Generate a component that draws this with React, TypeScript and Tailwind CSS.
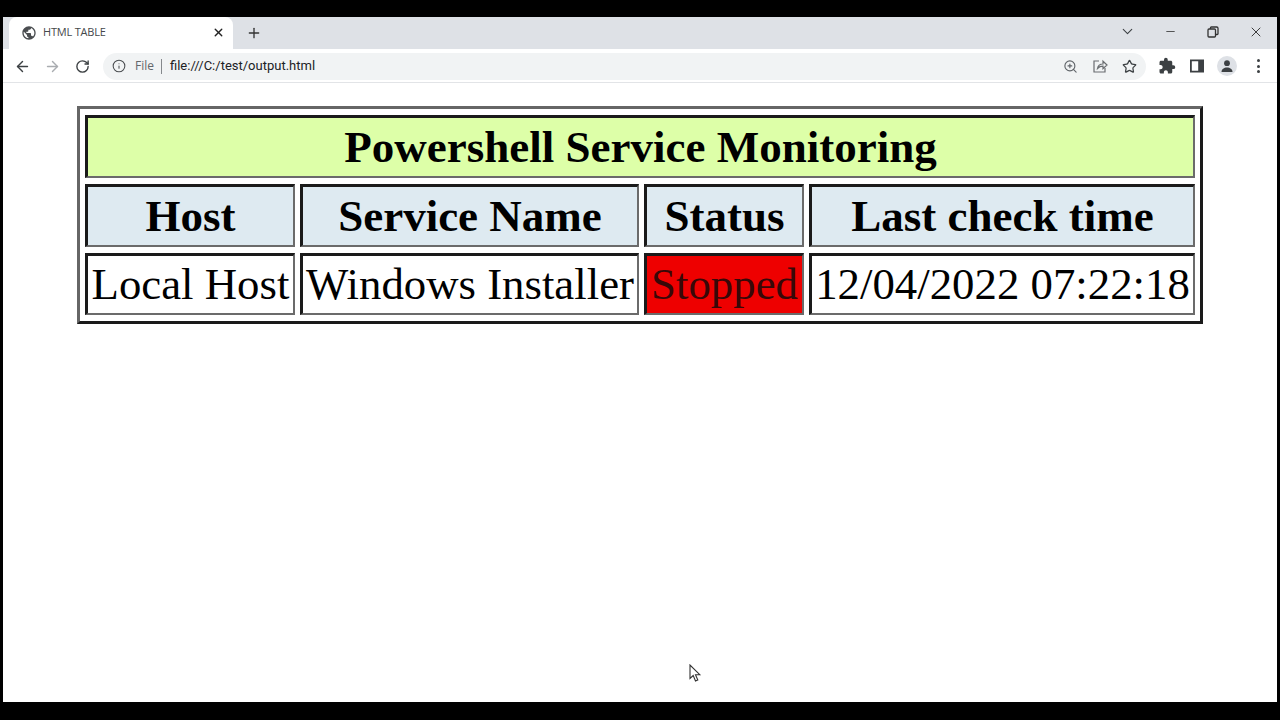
import { ArrowLeft, ArrowRight, ChevronDown, Info, Minus, Plus, RotateCw, Star, X, ZoomIn } from "lucide-react";
import { MdExtension, MdPublic } from "react-icons/md";

const headers = ["Host", "Service Name", "Status", "Last check time"];

const cellBorder = "border-2 border-t-[3px] border-l-[3px] border-t-[#1a1a1a] border-l-[#1a1a1a] border-r-[#6b6b6b] border-b-[#6b6b6b] p-0 text-center align-middle whitespace-nowrap";

const RestoreIcon = () => (
  <svg width="12" height="12" viewBox="0 0 12 12" fill="none" stroke="#333" strokeWidth="1.3">
    <rect x="1" y="3" width="7.5" height="8" rx="1" />
    <path d="M3.5 3V1.8q0-.8.8-.8h5.4q1.3 0 1.3 1.3v5.4q0 .8-.8.8H8.5" />
  </svg>
);

const ShareIcon = () => (
  <svg width="16" height="16" viewBox="0 0 16 16" fill="none" stroke="#6a6d70" strokeWidth="1.2">
    <path d="M7 3H2v11h11v-4" />
    <path d="M5.5 10.5C6 7.5 8 6 11 6V3.2L15 7l-4 3.6V8.2c-2.200 0-4 .7-5.500 2.300z" />
  </svg>
);

const PanelIcon = () => (
  <svg width="14" height="14" viewBox="0 0 14 14">
    <path d="M0 .5h14v13H0zM1.800 2.300v9.400h6.400V2.300z" fill="#3c4043" fillRule="evenodd" />
  </svg>
);

const Avatar = () => (
  <div className="w-5 h-5 rounded-full bg-[#dee1e6] flex items-center justify-center">
    <svg width="14" height="14" viewBox="0 0 14 14" fill="#3c4043">
      <circle cx="7" cy="4.200" r="2.900" />
      <path d="M1.500 13c0-3 2.600-4.500 5.500-4.500s5.500 1.500 5.500 4.500z" />
    </svg>
  </div>
);

const Dots = () => (
  <div className="flex flex-col gap-[2.500px]">
    <div className="w-[3px] h-[3px] rounded-full bg-[#3c4043]" />
    <div className="w-[3px] h-[3px] rounded-full bg-[#3c4043]" />
    <div className="w-[3px] h-[3px] rounded-full bg-[#3c4043]" />
  </div>
);

export default function App() {
  return (
    <div className="relative w-[1280px] h-[720px] bg-black pt-[17px] pb-[18px] px-[3px] overflow-hidden flex flex-col font-['Liberation_Sans',sans-serif]">
      {/* tab strip */}
      <div className="h-[32px] bg-[#dee1e6] flex items-stretch pl-[6px] shrink-0">
        <div className="w-[224px] bg-white rounded-t-lg flex items-center pl-[12px] pr-[8px] pb-[1px]">
          <MdPublic size={16} className="text-[#4a4d50]" />
          <span className="ml-[6px] text-[11px] tracking-[-0.2px] text-[#45484b] font-['Open_Sans',sans-serif]">HTML TABLE</span>
          <X size={13} strokeWidth={2.500} className="ml-auto text-[#222]" />
        </div>
        <div className="w-[42px] flex items-center justify-center pb-[1px]">
          <Plus size={16} strokeWidth={2} className="text-[#333]" />
        </div>
        <div className="ml-auto flex items-center pb-[3px]">
          <ChevronDown size={17} strokeWidth={1.500} className="text-[#3c4043] mr-[28px]" />
          <Minus size={13} strokeWidth={1.500} className="text-[#333] mr-[30px]" />
          <RestoreIcon />
          <X size={16} strokeWidth={1.300} className="text-[#222] ml-[29px] mr-[13px]" />
        </div>
      </div>

      {/* toolbar */}
      <div className="h-[34px] bg-white border-b border-[#e2e4e7] flex items-center shrink-0 pt-[1px]">
        <ArrowLeft size={17} strokeWidth={2} className="ml-[11px] text-[#3c4043]" />
        <ArrowRight size={17} strokeWidth={2} className="ml-[13px] text-[#a9acb0]" />
        <RotateCw size={15} strokeWidth={2.200} className="ml-[14px] text-[#3c4043]" />
        <div className="ml-[13px] w-[1043px] h-[27px] rounded-full bg-[#f1f3f4] flex items-center pl-[9px] pr-[3px]">
          <Info size={14} strokeWidth={1.800} className="text-[#4a4d50]" />
          <span className="ml-[9px] text-[12px] text-[#63666a] font-['Open_Sans',sans-serif]">File</span>
          <div className="ml-[7px] w-px h-[15px] bg-[#85888c]" />
          <span className="ml-[8px] text-[13px] text-[#202124] font-['Roboto',sans-serif]">file:///C:/test/output.html</span>
          <ZoomIn size={15} strokeWidth={1.800} className="ml-auto text-[#5f6368]" />
          <div className="ml-[14px]"><ShareIcon /></div>
          <Star size={15} strokeWidth={2} className="ml-[14px] mr-[6px] text-[#3c4043]" />
        </div>
        <div className="ml-[12px]"><MdExtension size={18} className="text-[#3c4043]" /></div>
        <div className="ml-[14px]"><PanelIcon /></div>
        <div className="ml-[13px]"><Avatar /></div>
        <div className="ml-[20px]"><Dots /></div>
      </div>

      {/* page */}
      <div className="flex-1 bg-white pt-[23px] pl-[74px]">
        <table className="table-fixed w-[1126px] border-separate border-spacing-x-[5px] border-spacing-y-[6px] border-[3px] border-t-[#666] border-l-[#666] border-r-[#1a1a1a] border-b-[#1a1a1a] font-['Liberation_Serif',serif] text-[44.800px] leading-none text-black">
          <colgroup>
            <col className="w-[210px]" />
            <col className="w-[339px]" />
            <col className="w-[160px]" />
            <col className="w-[386px]" />
          </colgroup>
          <thead>
            <tr>
              <th colSpan={4} className={`${cellBorder} h-[63px] text-[45px] bg-[#ddffa8]`}>Powershell Service Monitoring</th>
            </tr>
            <tr>
              {headers.map((h) => (
                <th key={h} className={`${cellBorder} h-[63px] text-[45px] bg-[#deeaf1]`}>{h}</th>
              ))}
            </tr>
          </thead>
          <tbody>
            <tr>
              <td className={`${cellBorder} h-[62px]`}>Local Host</td>
              <td className={`${cellBorder} h-[62px]`}>Windows Installer</td>
              <td className={`${cellBorder} h-[62px] bg-[#ee0000] text-[#380808]`}>Stopped</td>
              <td className={`${cellBorder} h-[62px]`}>12/04/2022 07:22:18</td>
            </tr>
          </tbody>
        </table>
      </div>

      {/* mouse pointer */}
      <svg className="absolute left-[689px] top-[664px]" width="13" height="19" viewBox="0 0 13 19">
        <path d="M1 1v13.500l3.200-3 2.300 5.500 2.300-1-2.300-5.300h4.300z" fill="#fff" stroke="#333" strokeWidth="1.100" />
      </svg>
    </div>
  );
}
